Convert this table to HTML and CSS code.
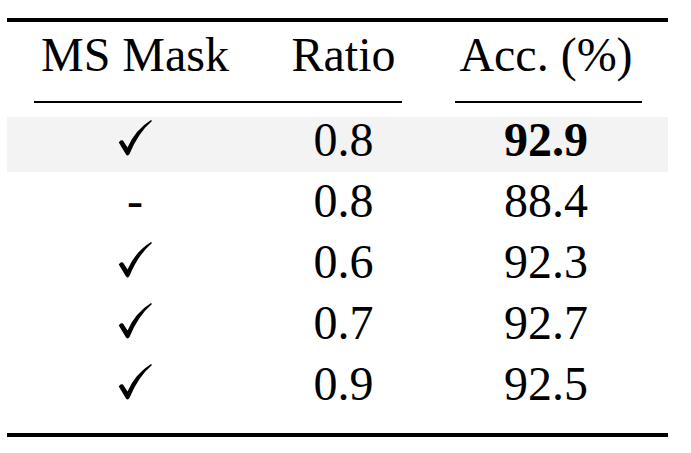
FILE: index.html
```html
<!DOCTYPE html>
<html>
<head>
<meta charset="utf-8">
<link rel="stylesheet" href="styles.css">
</head>
<body>
<div class="table">
  <div class="rule"></div>
  <div class="row head">
    <div class="cell">MS Mask</div>
    <div class="cell">Ratio</div>
    <div class="cell">Acc. (%)</div>
  </div>
  <div class="cmid">
    <div class="cmid-a"></div>
    <div class="cmid-b"></div>
  </div>
  <div class="tbody">
    <div class="row data hl">
      <div class="cell"><svg class="check" viewBox="0 0 35 38" width="35" height="38"><path d="M0.8,23.5 Q2.5,20.5 5,21.5 L9.5,28.5 Q17,11 33,1 L34,2 Q20,14 11.5,35 Q10,37.5 8,35.5 Z"/></svg></div>
      <div class="cell">0.8</div>
      <div class="cell"><b>92.9</b></div>
    </div>
    <div class="row data">
      <div class="cell">-</div>
      <div class="cell">0.8</div>
      <div class="cell">88.4</div>
    </div>
    <div class="row data">
      <div class="cell"><svg class="check" viewBox="0 0 35 38" width="35" height="38"><path d="M0.8,23.5 Q2.5,20.5 5,21.5 L9.5,28.5 Q17,11 33,1 L34,2 Q20,14 11.5,35 Q10,37.5 8,35.5 Z"/></svg></div>
      <div class="cell">0.6</div>
      <div class="cell">92.3</div>
    </div>
    <div class="row data">
      <div class="cell"><svg class="check" viewBox="0 0 35 38" width="35" height="38"><path d="M0.8,23.5 Q2.5,20.5 5,21.5 L9.5,28.5 Q17,11 33,1 L34,2 Q20,14 11.5,35 Q10,37.5 8,35.5 Z"/></svg></div>
      <div class="cell">0.7</div>
      <div class="cell">92.7</div>
    </div>
    <div class="row data">
      <div class="cell"><svg class="check" viewBox="0 0 35 38" width="35" height="38"><path d="M0.8,23.5 Q2.5,20.5 5,21.5 L9.5,28.5 Q17,11 33,1 L34,2 Q20,14 11.5,35 Q10,37.5 8,35.5 Z"/></svg></div>
      <div class="cell">0.9</div>
      <div class="cell">92.5</div>
    </div>
  </div>
  <div class="rule"></div>
</div>
</body>
</html>
```

FILE: styles.css
```css
html, body {
  margin: 0;
  padding: 0;
  background: #ffffff;
}

body {
  font-family: "Liberation Serif", "Times New Roman", serif;
  color: #000000;
}

.table {
  width: 661px;
  margin: 18px 0 0 7px;
  display: flex;
  flex-direction: column;
}

.rule {
  height: 4px;
  background: #000000;
}

.row {
  display: grid;
  grid-template-columns: 256px 161px 244px;
  font-size: 48px;
}

.cell {
  text-align: center;
  white-space: nowrap;
}

.head {
  line-height: 60px;
  padding: 3px 0 16px;
}

.cmid {
  display: grid;
  grid-template-columns: 417px 244px;
  height: 2px;
}

.cmid-a {
  background: #000000;
  margin: 0 22px 0 27px;
}

.cmid-b {
  background: #000000;
  margin: 0 26px 0 31px;
}

.tbody {
  padding: 8px 0 17px;
}

.data {
  line-height: 58px;
  height: 61px;
  box-sizing: border-box;
  padding-bottom: 3px;
}

.hl {
  background: linear-gradient(to bottom, transparent 6px, #f3f3f3 6px);
}

.check {
  display: inline-block;
  vertical-align: -1px;
  fill: #000000;
}

b {
  font-weight: bold;
}
```
